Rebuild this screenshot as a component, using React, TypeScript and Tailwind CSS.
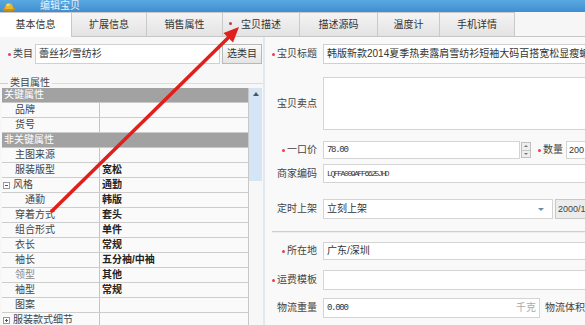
import React from "react";

type Row = {
  label: string;
  value?: string;
  head?: boolean;
  box?: "minus" | "plus";
  indent?: boolean;
  dim?: boolean;
};

const rows: Row[] = [
  { label: "关键属性", head: true },
  { label: "品牌" },
  { label: "货号" },
  { label: "非关键属性", head: true },
  { label: "主图来源" },
  { label: "服装版型", value: "宽松" },
  { label: "风格", value: "通勤", box: "minus" },
  { label: "通勤", value: "韩版", indent: true },
  { label: "穿着方式", value: "套头" },
  { label: "组合形式", value: "单件" },
  { label: "衣长", value: "常规" },
  { label: "袖长", value: "五分袖/中袖" },
  { label: "领型", value: "其他", dim: true },
  { label: "袖型", value: "常规" },
  { label: "图案" },
  { label: "服装款式细节", box: "plus" },
];

const tabs = [
  { name: "基本信息", w: "w-[72px]", active: true },
  { name: "扩展信息", w: "w-[75px]" },
  { name: "销售属性", w: "w-[76px]" },
  { name: "宝贝描述", w: "w-[77px]", star: true },
  { name: "描述源码", w: "w-[78px]" },
  { name: "温度计", w: "w-[62px]" },
  { name: "手机详情", w: "w-[75px]" },
];

function Dot() {
  return <span className="mr-[2px] inline-block h-[3px] w-[3px] rounded-full bg-[#e0405a]" />;
}

function Label({ text, req, h }: { text: string; req?: boolean; h: string }) {
  return (
    <div className={`flex w-[53px] shrink-0 items-center justify-end whitespace-nowrap pr-[1px] text-[10px] text-[#444] ${h}`}>
      {req && <Dot />}
      {text}
    </div>
  );
}

function Box({ kind }: { kind: "minus" | "plus" }) {
  return (
    <span className="relative mr-[3px] inline-block h-[7px] w-[7px] border border-[#9a9a9a] bg-white">
      <span className="absolute left-[1px] top-[2px] h-px w-[3px] bg-[#555]" />
      {kind === "plus" && <span className="absolute left-[2px] top-[1px] h-[3px] w-px bg-[#555]" />}
    </span>
  );
}

export default function App() {
  return (
    <div className="relative flex h-[325px] w-[585px] flex-col overflow-hidden bg-[#f7f7f7] font-['Liberation_Sans','Noto_Sans_CJK_SC',sans-serif] text-[10px] leading-none text-[#333]">
      {/* title bar */}
      <div className="flex h-[12px] shrink-0 items-center bg-gradient-to-b from-[#5aa8e0] to-[#3f8ed2]">
        <svg width="14" height="11" viewBox="0 0 14 11" className="ml-[2px]">
          <ellipse cx="7" cy="8" rx="6.5" ry="2.5" fill="#c8901a" />
          <path d="M3 8 Q3 2 7 2 Q11 2 11 8 Z" fill="#e8b830" />
          <ellipse cx="6" cy="4" rx="1.5" ry="1" fill="#f8e080" />
        </svg>
        <span className="ml-[24px] text-[10px] text-[#e8f2fb]">编辑宝贝</span>
      </div>

      {/* tabs */}
      <div className="flex h-[25px] shrink-0 items-end border-b border-[#c6c6c6] bg-[#f6f6f6]">
        {tabs.map((t) => (
          <div
            key={t.name}
            className={`relative flex h-[24px] items-center justify-center border-r border-t border-[#c9c9c9] ${t.w} ${
              t.active ? "-mb-px h-[25px] bg-white" : "bg-gradient-to-b from-[#f4f4f4] to-[#e3e3e3]"
            }`}
          >
            {t.star && <span className="absolute left-[6px] top-[9px] h-[3px] w-[3px] rounded-full bg-[#b04048]" />}
            <span className="text-[10px] text-[#333]">{t.name}</span>
          </div>
        ))}
      </div>

      <div className="flex min-h-0 flex-1">
        {/* left column */}
        <div className="flex w-[263px] shrink-0 flex-col">
          <div className="mt-[7px] flex h-[20px] items-center">
            <div className="flex w-[35px] items-center justify-end pr-[2px] text-[10px] text-[#444]">
              <Dot />
              类目
            </div>
            <div className="flex h-[20px] w-[185px] items-center border border-[#d0d0d0] bg-white pl-[3px] text-[10px] text-[#333]">
              蕾丝衫/雪纺衫
            </div>
            <div className="ml-[2px] flex h-[20px] w-[40px] items-center justify-center border border-[#b8b8b8] bg-gradient-to-b from-[#fafafa] to-[#e4e4e4] text-[10px]">
              选类目
            </div>
          </div>

          <div className="mt-[14px] flex h-[11px] items-center">
            <div className="h-px w-[8px] bg-[#cfcfcf]" />
            <span className="px-[2px] text-[10px] text-[#444]">类目属性</span>
            <div className="h-px flex-1 bg-[#dcdcdc]" />
          </div>

          <div className="flex pl-[2px]">
            <div className="w-[246px]">
              {rows.map((r, i) =>
                r.head ? (
                  <div key={i} className="flex h-[15px] items-center border-b border-[#c8c8c8] bg-[#a2a2a2] pl-[2px] text-[10px] text-white">
                    {r.label}
                  </div>
                ) : (
                  <div key={i} className="flex h-[15px] border-b border-[#cdcdcd] bg-[#fafafa]">
                    <div
                      className={`flex w-[98px] items-center border-r border-[#c4c4c4] text-[10px] ${r.dim ? "text-[#888]" : "text-[#444]"} ${
                        r.box ? "pl-[1px]" : r.indent ? "pl-[23px]" : "pl-[13px]"
                      }`}
                    >
                      {r.box && <Box kind={r.box} />}
                      {r.label}
                    </div>
                    <div className="flex flex-1 items-center pl-[2px] text-[10px] font-bold text-[#222]">{r.value}</div>
                  </div>
                )
              )}
            </div>
            <div className="w-[14px] border-l border-[#c8c8c8]">
              <div className="flex h-[93px] justify-center bg-[#d5e5f5] pt-[4px]">
                <div className="h-0 w-0 border-x-[3px] border-b-[4px] border-x-transparent border-b-[#555]" />
              </div>
            </div>
          </div>
        </div>

        {/* right column */}
        <div className="flex min-w-0 flex-1 flex-col overflow-hidden border-l-2 border-[#e0e9f2] bg-[#f9f9f9] pl-[5px]">
          <div className="mt-[7px] flex h-[20px] items-center">
            <div className="flex w-[48px] shrink-0 items-center justify-end pr-[1px] text-[10px] text-[#444]">
              <Dot />
              宝贝标题
            </div>
            <div className="ml-[5px] flex h-[20px] flex-1 -mr-[20px] items-center overflow-hidden whitespace-nowrap border border-[#d0d0d0] bg-white pl-[3px] text-[10px] text-[#333]">
              韩版新款2014夏季热卖露肩雪纺衫短袖大码百搭宽松显瘦蝙
            </div>
          </div>

          <div className="mt-[13px] flex h-[53px] items-center -ml-[5px]">
            <Label text="宝贝卖点" h="h-[53px]" />
            <div className="ml-[5px] h-[53px] flex-1 -mr-[4px] border border-[#d4d4d4] bg-white" />
          </div>

          <div className="mt-[11px] flex h-[18px] items-center -ml-[5px]">
            <Label text="一口价" req h="h-[18px]" />
            <div className="ml-[5px] flex h-[18px] w-[197px] items-center border border-[#d4d4d4] bg-white pl-[3px] font-['Liberation_Mono',monospace] text-[9px] tracking-[-1.3px] text-[#333]">
              78.00
            </div>
            <div className="ml-[1px] flex h-[16px] w-[10px] flex-col border border-[#c0c0c0] bg-[#eeeeee]">
              <div className="flex flex-1 items-center justify-center border-b border-[#c8c8c8]">
                <div className="h-0 w-0 border-x-[2px] border-b-[2px] border-x-transparent border-b-[#777]" />
              </div>
              <div className="flex flex-1 items-center justify-center">
                <div className="h-0 w-0 border-x-[2px] border-t-[2px] border-x-transparent border-t-[#777]" />
              </div>
            </div>
            <div className="ml-[7px] flex items-center text-[10px] text-[#444]">
              <Dot />
              数量
            </div>
            <div className="ml-[3px] flex h-[18px] flex-1 -mr-[4px] items-center border border-[#d4d4d4] bg-white pl-[2px] font-['Liberation_Sans',sans-serif] text-[9px]">
              200
            </div>
          </div>

          <div className="mt-[5px] flex h-[19px] items-center -ml-[5px]">
            <Label text="商家编码" h="h-[19px]" />
            <div className="ml-[5px] flex h-[19px] flex-1 -mr-[4px] items-center border border-[#d4d4d4] bg-white pl-[3px] font-['Liberation_Mono',monospace] text-[8px] tracking-[-1.4px] text-[#333]">
              LQFFA009AFF6625JHD
            </div>
          </div>

          <div className="mt-[16px] flex h-[20px] items-center -ml-[5px]">
            <Label text="定时上架" h="h-[20px]" />
            <div className="ml-[5px] flex h-[20px] w-[230px] items-center justify-between border border-[#d4d4d4] bg-white pl-[3px] pr-[8px] text-[10px] text-[#333]">
              立刻上架
              <div className="h-0 w-0 border-x-[3px] border-t-[3px] border-x-transparent border-t-[#6a8aa8]" />
            </div>
            <div className="ml-[2px] flex h-[20px] flex-1 -mr-[4px] items-center border border-[#c8c8c8] bg-[#ececec] pl-[2px] font-['Liberation_Sans',sans-serif] text-[9px] text-[#444]">
              2000/1
            </div>
          </div>

          <div className="mt-[12px] h-[2px] -mr-[4px] ml-[2px] border-t border-[#cfcfcf] bg-[#eeeeee]" />

          <div className="mt-[9px] flex h-[18px] items-center -ml-[5px]">
            <Label text="所在地" req h="h-[18px]" />
            <div className="ml-[5px] flex h-[18px] flex-1 -mr-[4px] items-center border border-[#d4d4d4] bg-white pl-[3px] text-[10px] text-[#333]">
              广东/深圳
            </div>
          </div>

          <div className="mt-[10px] flex h-[20px] items-center -ml-[5px]">
            <Label text="运费模板" req h="h-[20px]" />
            <div className="ml-[5px] h-[20px] flex-1 -mr-[4px] border border-[#d4d4d4] bg-white" />
          </div>

          <div className="mt-[8px] flex h-[20px] items-center -ml-[5px]">
            <Label text="物流重量" h="h-[20px]" />
            <div className="ml-[5px] flex h-[20px] w-[226px] items-center justify-between border border-[#d4d4d4] bg-white pl-[3px] pr-[3px]">
              <span className="font-['Liberation_Mono',monospace] text-[9px] tracking-[-1.3px] text-[#333]">0.000</span>
              <span className="text-[10px] text-[#aaa]">千克</span>
            </div>
            <span className="ml-[5px] whitespace-nowrap text-[10px] text-[#444]">物流体积</span>
          </div>
        </div>
      </div>

      {/* red annotation arrow */}
      <svg className="pointer-events-none absolute left-0 top-0" width="585" height="325" viewBox="0 0 585 325">
        <line x1="52" y1="211" x2="229" y2="37" stroke="#e0201c" strokeWidth="3.5" strokeLinecap="round" />
        <polygon points="239,27 233,42.5 223.5,33" fill="#e0201c" />
      </svg>
    </div>
  );
}
